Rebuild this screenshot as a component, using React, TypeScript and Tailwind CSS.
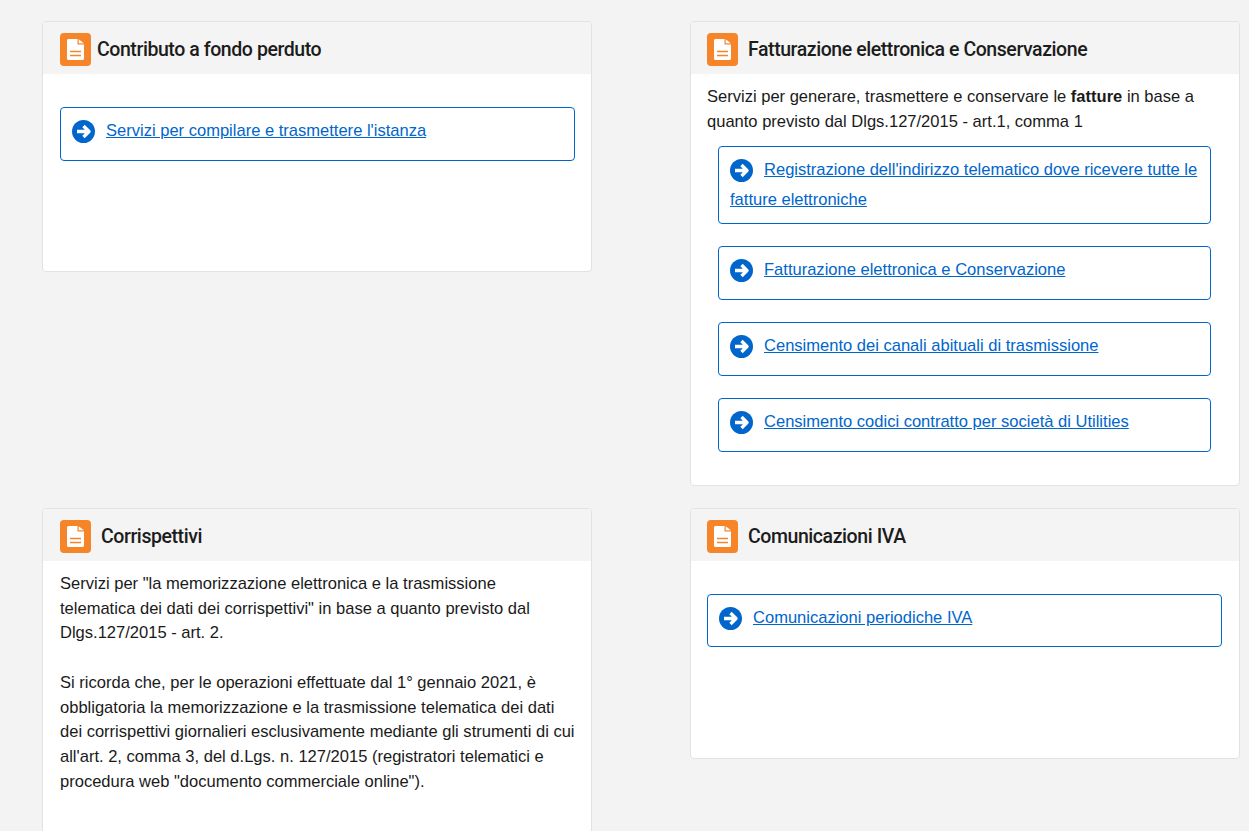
import React from "react";

const DocIcon = () => (
  <span className="flex h-[33px] w-[31px] shrink-0 items-center justify-center rounded-[4px] bg-[#f68428]">
    <svg width="17" height="21" viewBox="0 0 17 21">
      <path d="M1.5 0H10.5V5.5H17V19.5C17 20.3 16.3 21 15.5 21H1.5C.7 21 0 20.3 0 19.5V1.5C0 .7.7 0 1.5 0Z" fill="#fff" />
      <path d="M11.7 0.2L16.8 4.3H11.7Z" fill="#fff" />
      <path d="M3 12.5H14M3 16.5H14" stroke="#f68428" strokeWidth="1.4" fill="none" />
    </svg>
  </span>
);

const ArrowIcon = () => (
  <svg
    width="23"
    height="23"
    viewBox="0 0 23 23"
    className="mt-[4px] mb-[6px] mr-[11px] inline-block align-[-13px]"
  >
    <circle cx="11.5" cy="11.5" r="11.5" fill="#0066cc" />
    <path
      d="M5 11.5H16M11.5 6L17 11.5L11.5 17"
      stroke="#fff"
      strokeWidth="3.4"
      strokeLinejoin="round"
      fill="none"
    />
  </svg>
);

const LinkBox = ({ text, pb = "pb-[11px]" }: { text: string; pb?: string }) => (
  <div className={`rounded-[4px] border border-[#0066cc] bg-white pt-[8px] pr-[11px] pl-[11px] leading-[24px] ${pb}`}>
    <ArrowIcon />
    <a href="#" className="text-[#0066cc] underline">
      {text}
    </a>
  </div>
);

const Card = ({
  title,
  gap,
  pad,
  className,
  children,
}: {
  title: string;
  gap: string;
  pad: string;
  className: string;
  children: React.ReactNode;
}) => (
  <section className={`overflow-hidden rounded-[4px] border border-[#e2e2e2] bg-white ${className}`}>
    <header className={`flex h-[52px] items-center bg-[#f4f4f4] pt-[2px] ${pad} ${gap}`}>
      <DocIcon />
      <h2 className="mt-[2px] font-['Roboto',sans-serif] text-[19.5px] font-medium tracking-[-0.43px] text-[#1c1c1c]">
        {title}
      </h2>
    </header>
    {children}
  </section>
);

export default function App() {
  return (
    <div className="h-[831px] overflow-hidden bg-[#f3f3f3] font-['Liberation_Sans',Arial,sans-serif] text-[16.55px] text-[#1a1a1a]">
      <div className="grid grid-cols-[550px_550px] items-start gap-x-[98px] gap-y-[22px] pt-[21px] pl-[42px]">
        <Card title="Contributo a fondo perduto" gap="gap-[6px]" pad="pl-[17px]" className="h-[251px]">
          <div className="pt-[33px] pr-[16px] pl-[17px]">
            <LinkBox text="Servizi per compilare e trasmettere l'istanza" />
          </div>
        </Card>

        <Card title="Fatturazione elettronica e Conservazione" gap="gap-[10px]" pad="pl-[16px]" className="h-[465px]">
          <div className="pt-[11px] pr-[17px] pl-[16px]">
            <p className="leading-[24.8px]">
              Servizi per generare, trasmettere e conservare le <b>fatture</b> in base a quanto
              previsto dal Dlgs.127/2015 - art.1, comma 1
            </p>
            <div className="mt-[11px] mr-[11px] ml-[11px] flex flex-col gap-[22px]">
              <LinkBox text="Registrazione dell'indirizzo telematico dove ricevere tutte le fatture elettroniche" />
              <LinkBox text="Fatturazione elettronica e Conservazione" />
              <LinkBox text="Censimento dei canali abituali di trasmissione" />
              <LinkBox text="Censimento codici contratto per società di Utilities" />
            </div>
          </div>
        </Card>

        <Card title="Corrispettivi" gap="gap-[10px]" pad="pl-[17px]" className="h-[400px]">
          <div className="pt-[11px] pr-[16px] pl-[17px] leading-[24.7px]">
            <p>
              Servizi per "la memorizzazione elettronica e la trasmissione
              <br />
              telematica dei dati dei corrispettivi" in base a quanto previsto dal
              <br />
              Dlgs.127/2015 - art. 2.
            </p>
            <p className="mt-[24.7px]">
              Si ricorda che, per le operazioni effettuate dal 1° gennaio 2021, è obbligatoria la
              memorizzazione e la trasmissione telematica dei dati dei corrispettivi giornalieri
              esclusivamente mediante gli strumenti di cui all'art. 2, comma 3, del d.Lgs. n.
              127/2015 (registratori telematici e procedura web "documento commerciale online").
            </p>
          </div>
        </Card>

        <Card title="Comunicazioni IVA" gap="gap-[10px]" pad="pl-[16px]" className="h-[251px]">
          <div className="pt-[33px] pr-[17px] pl-[16px]">
            <LinkBox text="Comunicazioni periodiche IVA" pb="pb-[10px]" />
          </div>
        </Card>
      </div>
    </div>
  );
}
